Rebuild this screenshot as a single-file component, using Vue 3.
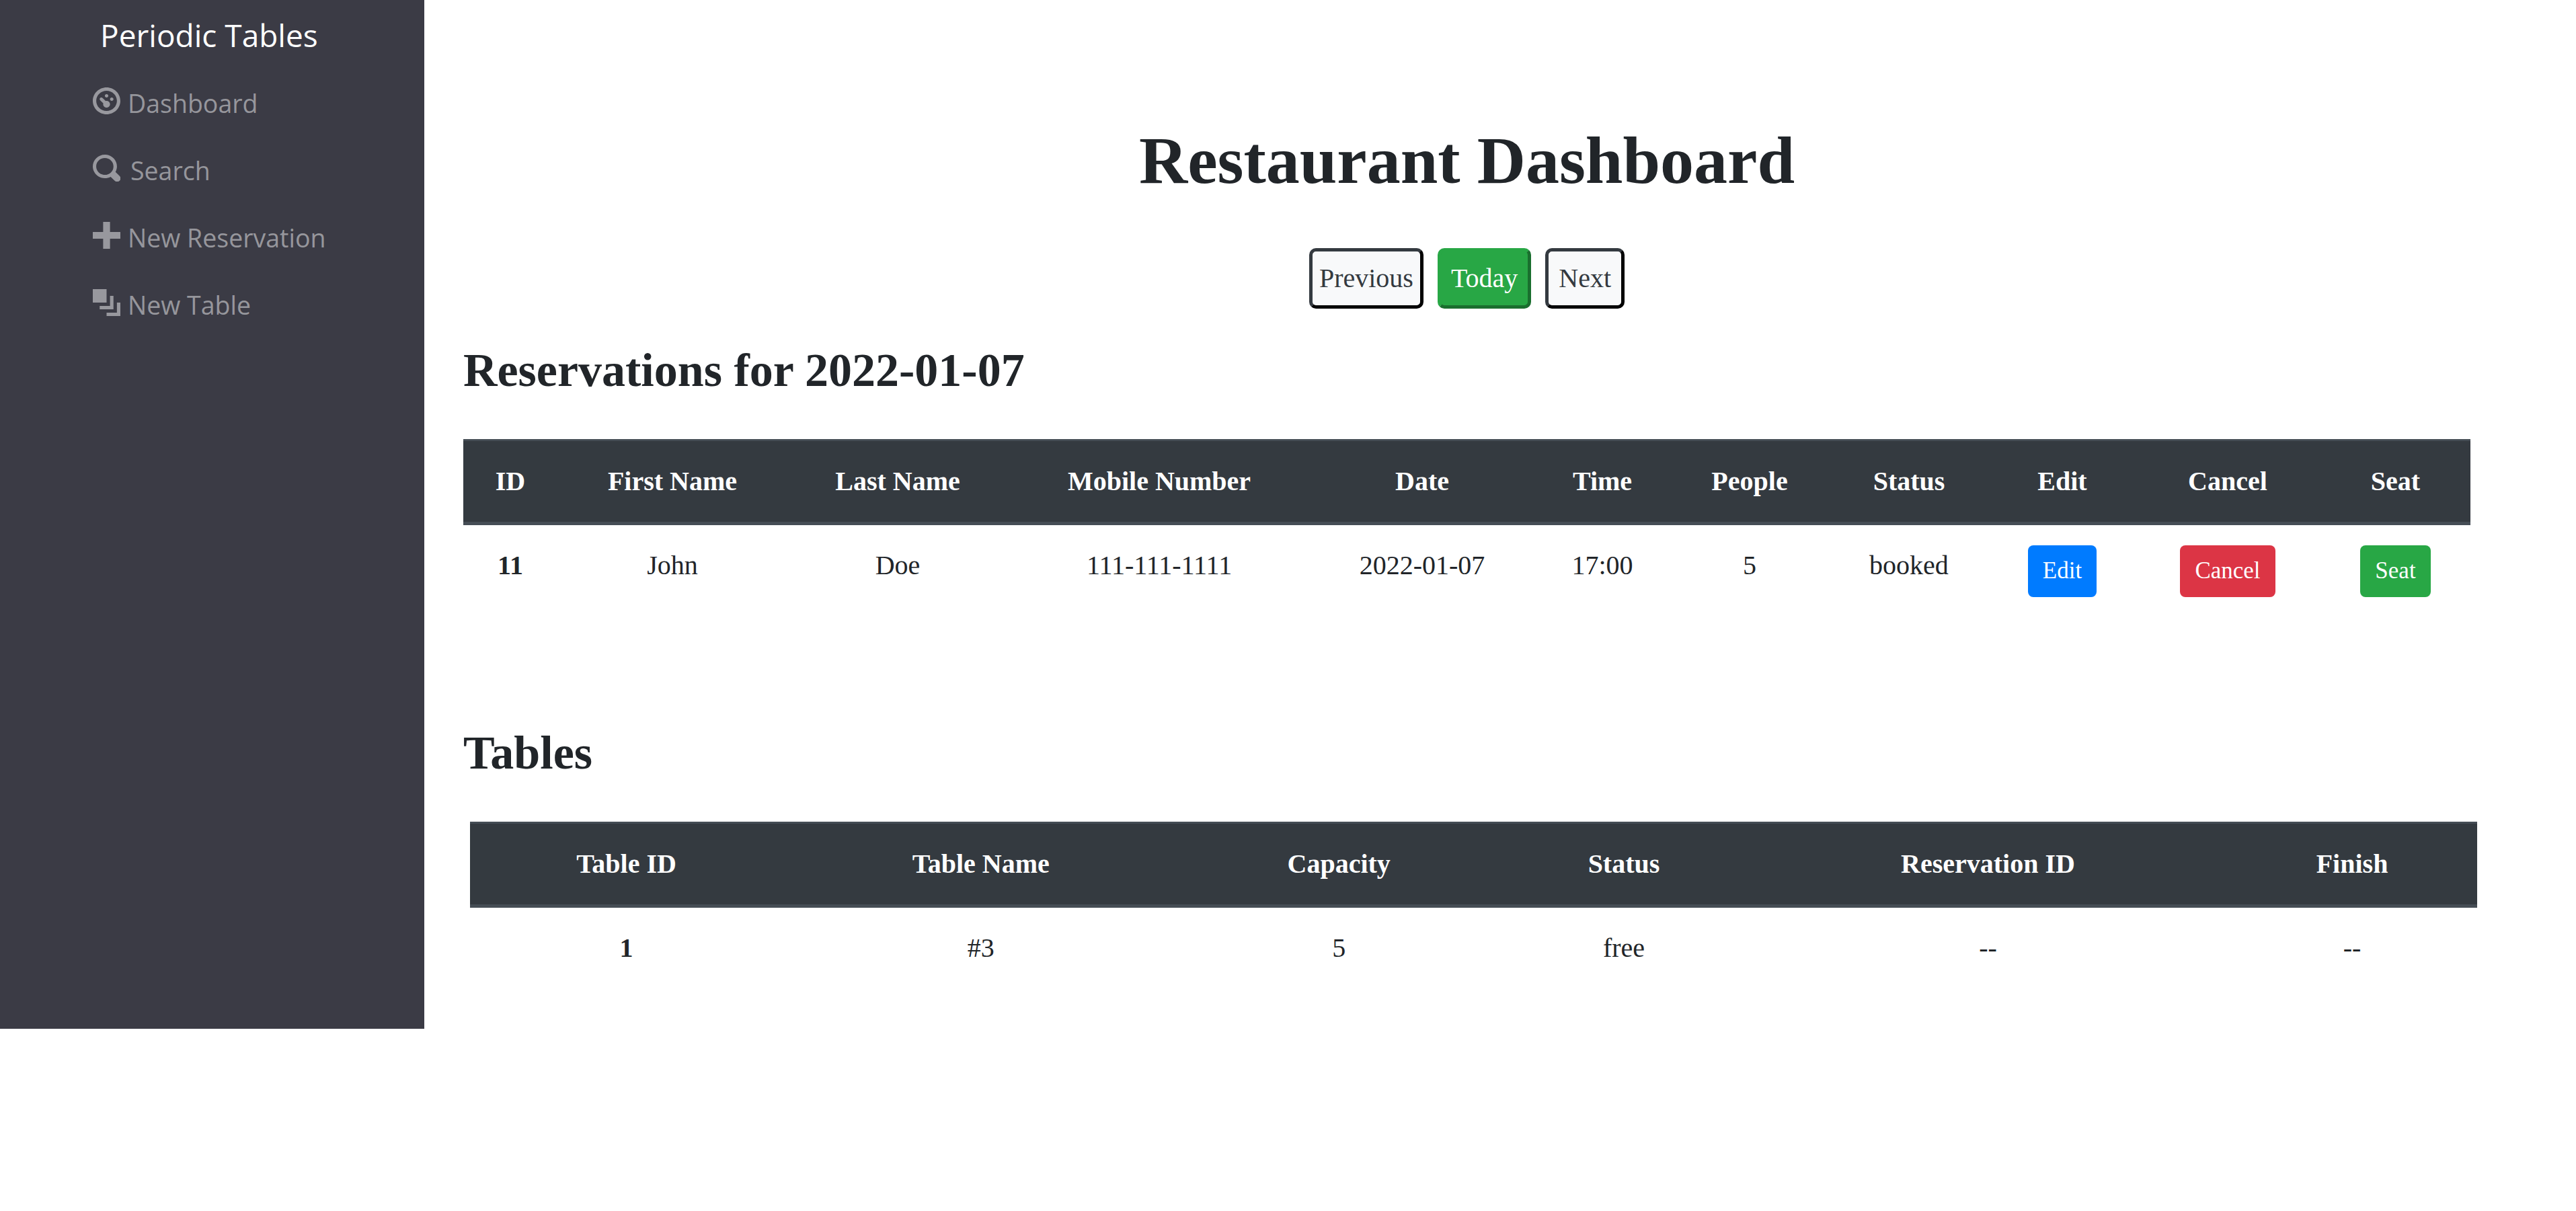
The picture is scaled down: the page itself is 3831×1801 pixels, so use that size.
<script setup>
const links = [
  { label: 'Dashboard', icon: 'M4 0c-2.2 0-4 1.8-4 4s1.8 4 4 4 4-1.8 4-4-1.8-4-4-4zm0 1c1.66 0 3 1.34 3 3s-1.34 3-3 3-3-1.34-3-3 1.34-3 3-3zm0 1c-.28 0-.5.22-.5.5s.22.5.5.5.5-.22.5-.5-.22-.5-.5-.5zm-1.66 1a.5.5 0 0 0-.19.84l.91.91c-.02.08-.06.16-.06.25 0 .55.45 1 1 1s1-.45 1-1-.45-1-1-1c-.09 0-.17.04-.25.06l-.91-.91a.5.5 0 0 0-.44-.16.5.5 0 0 0-.06 0zm3.16 0c-.28 0-.5.22-.5.5s.22.5.5.5.5-.22.5-.5-.22-.5-.5-.5z' },
  { label: 'Search', wide: true, icon: 'M3.5 0c-1.93 0-3.5 1.57-3.5 3.5s1.57 3.5 3.5 3.5c.59 0 1.17-.14 1.66-.41a1 1 0 0 0 .13.13l1 1a1.02 1.02 0 1 0 1.44-1.44l-1-1a1 1 0 0 0-.16-.13c.27-.49.44-1.06.44-1.66 0-1.93-1.57-3.5-3.5-3.5zm0 1c1.39 0 2.5 1.11 2.5 2.5 0 .66-.24 1.27-.66 1.72-.01.01-.02.02-.03.03a1 1 0 0 0-.13.13c-.44.4-1.04.63-1.69.63-1.39 0-2.5-1.11-2.5-2.5s1.11-2.5 2.5-2.5z' },
  { label: 'New Reservation', icon: 'M3 0v3h-3v2h3v3h2v-3h3v-2h-3v-3h-2z' },
  { label: 'New Table', icon: 'M0 0v4h4v-4h-4zm5 2v3h-3v1h4v-4h-1zm2 2v3h-3v1h4v-4h-1z' },
]
const resHeads = ['ID', 'First Name', 'Last Name', 'Mobile Number', 'Date', 'Time', 'People', 'Status', 'Edit', 'Cancel', 'Seat']
const resCols = [140, 342, 328, 450, 332, 204, 234, 240, 216, 276, 223]
const resCells = ['John', 'Doe', '111-111-1111', '2022-01-07', '17:00', '5', 'booked']
const tableHeads = ['Table ID', 'Table Name', 'Capacity', 'Status', 'Reservation ID', 'Finish']
const tableCells = ['#3', '5', 'free', '--', '--']
</script>

<template>
  <div class="layout">
    <aside class="sidebar">
      <div class="brand">Periodic Tables</div>
      <nav class="nav">
        <a v-for="l in links" :key="l.label" class="link">
          <svg class="icon" viewBox="0 0 8 8" preserveAspectRatio="none" aria-hidden="true"><path :d="l.icon" fill="currentColor" /></svg>
          <span :class="{ wide: l.wide }">{{ l.label }}</span>
        </a>
      </nav>
    </aside>
    <main class="main">
      <h1 class="title">Restaurant Dashboard</h1>
      <div class="pager">
        <button class="pg light tight">Previous</button>
        <button class="pg green">Today</button>
        <button class="pg light">Next</button>
      </div>
      <h2 class="heading">Reservations for 2022-01-07</h2>
      <table class="grid fixed">
        <colgroup>
          <col v-for="(w, i) in resCols" :key="i" :style="{ width: w + 'px' }" />
        </colgroup>
        <thead>
          <tr><th v-for="h in resHeads" :key="h">{{ h }}</th></tr>
        </thead>
        <tbody>
          <tr>
            <th>11</th>
            <td v-for="(c, i) in resCells" :key="i">{{ c }}</td>
            <td><a class="sm blue">Edit</a></td>
            <td><a class="sm red">Cancel</a></td>
            <td><a class="sm grn">Seat</a></td>
          </tr>
        </tbody>
      </table>
      <h2 class="heading second">Tables</h2>
      <table class="grid shifted">
        <thead>
          <tr><th v-for="h in tableHeads" :key="h">{{ h }}</th></tr>
        </thead>
        <tbody>
          <tr>
            <th>1</th>
            <td v-for="(c, i) in tableCells" :key="i">{{ c }}</td>
          </tr>
        </tbody>
      </table>
    </main>
  </div>
</template>

<style scoped>
.layout {
  display: flex;
  width: 3831px;
  height: 1530px;
  font-family: "Liberation Serif", "Times New Roman", serif;
  font-size: 40px;
  line-height: 60px;
  color: #212529;
}
.sidebar {
  flex: 0 0 631px;
  background: #3b3b45;
  font-family: "Open Sans", sans-serif;
}
.brand {
  padding: 22px 0 0 149px;
  font-size: 46px;
  line-height: 60px;
  color: #fff;
}
.nav {
  display: flex;
  flex-direction: column;
  gap: 40px;
  margin-top: 36px;
  padding-left: 138px;
}
.link {
  display: flex;
  gap: 11px;
  height: 60px;
  color: rgba(255, 255, 255, 0.48);
  font-size: 37.5px;
  line-height: 60px;
}
.icon {
  flex: none;
  width: 41px;
  height: 40px;
  margin-top: 12px;
}
.link span {
  margin-top: 6px;
}
.link .wide {
  margin-left: 4px;
}
.main {
  flex: 1;
  padding: 179px 157px 0 58px;
  min-width: 0;
}
.title {
  margin: 0;
  font-size: 100px;
  line-height: 120px;
  font-weight: 700;
  text-align: center;
}
.pager {
  display: flex;
  justify-content: center;
  gap: 21px;
  margin-top: 70px;
}
.pg {
  height: 90px;
  padding: 0 15px;
  border: 5px solid;
  border-radius: 10px;
  font: inherit;
  color: #343a40;
}
.tight {
  padding: 0 10px;
}
.light {
  background: #f8f9fa;
  border-color: #343a40 #000 #000 #343a40;
}
.green {
  background: #28a745;
  color: #fff;
  border-color: #28a745 #1a6e2e #1a6e2e #28a745;
}
.heading {
  margin: 50px 0 60px;
  font-size: 70px;
  line-height: 84px;
  font-weight: 700;
}
.second {
  margin-top: 160px;
}
.grid {
  width: 2985px;
  border-collapse: collapse;
  text-align: center;
}
.fixed {
  table-layout: fixed;
}
.shifted {
  margin-left: 10px;
}
.grid thead th {
  padding: 30px;
  background: #343a40;
  color: #fff;
  border-top: 3px solid #454d55;
  border-bottom: 5px solid #454d55;
  font-weight: 700;
}
.grid tbody th,
.grid tbody td {
  padding: 30px;
  vertical-align: top;
}
.grid tbody th {
  font-weight: 700;
}
.sm {
  display: inline-block;
  padding: 10px 20px;
  border: 2.5px solid transparent;
  border-radius: 8px;
  font-size: 35px;
  line-height: 52.5px;
  color: #fff;
}
.blue { background: #007bff; }
.red { background: #dc3545; }
.grn { background: #28a745; }
</style>
